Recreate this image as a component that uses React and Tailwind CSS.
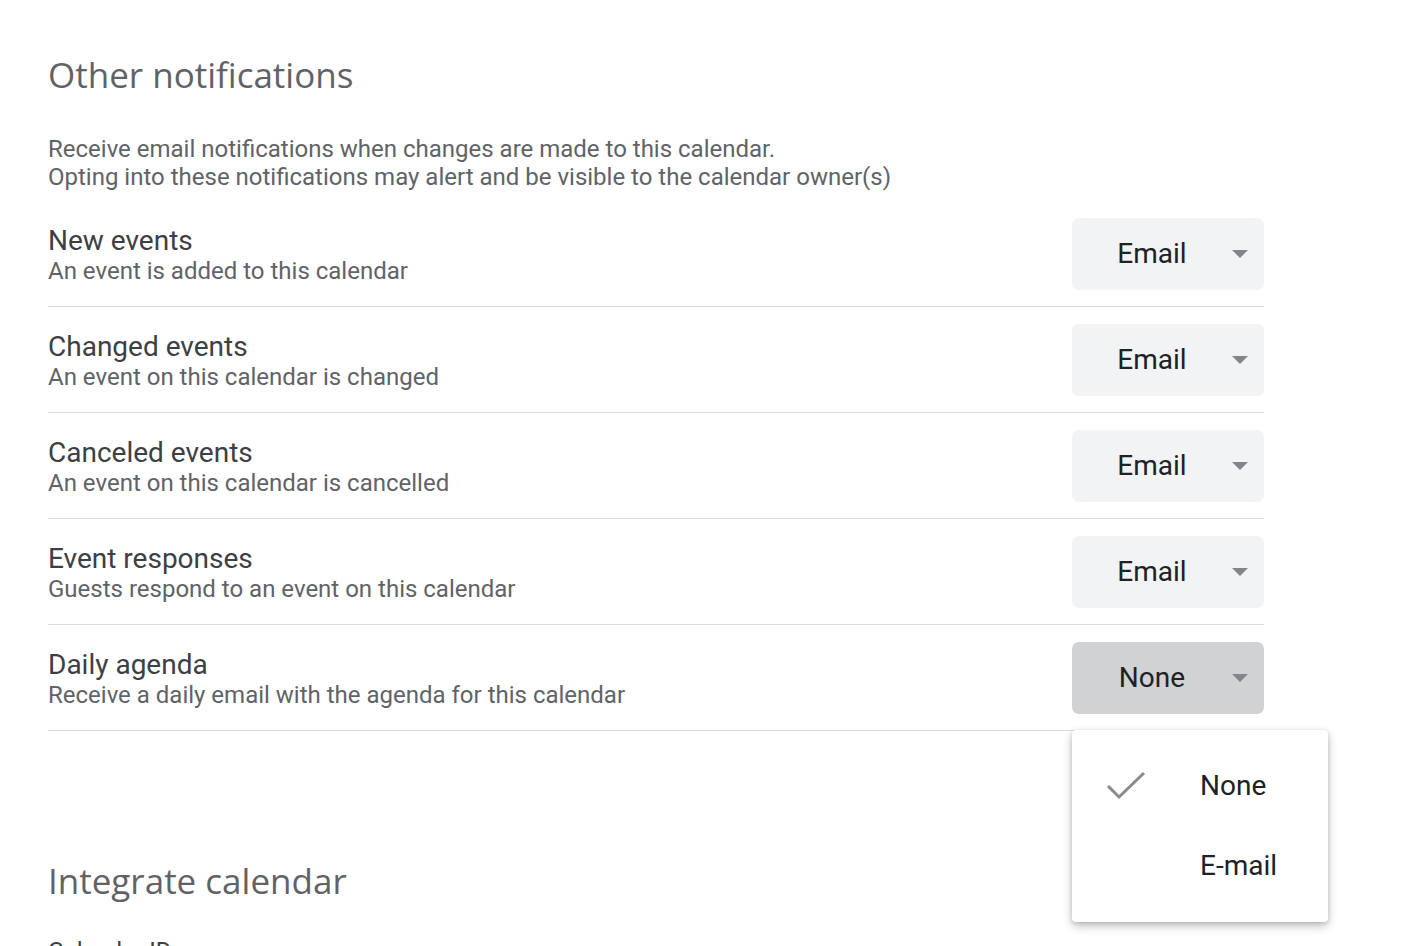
import React from "react";

const rows = [
  { title: "New events", sub: "An event is added to this calendar", value: "Email" },
  { title: "Changed events", sub: "An event on this calendar is changed", value: "Email" },
  { title: "Canceled events", sub: "An event on this calendar is cancelled", value: "Email" },
  { title: "Event responses", sub: "Guests respond to an event on this calendar", value: "Email" },
  { title: "Daily agenda", sub: "Receive a daily email with the agenda for this calendar", value: "None", active: true },
];

function Arrow() {
  return (
    <svg width="16" height="8" viewBox="0 0 16 8" className="shrink-0">
      <path d="M0 0 L16 0 L8 8 Z" fill="#80868b" />
    </svg>
  );
}

export default function App() {
  return (
    <div
      className="relative w-[1410px] h-[946px] overflow-hidden bg-white"
      style={{ fontFamily: "Roboto, 'Liberation Sans', sans-serif" }}
    >
      <div className="pl-[48px] w-[1264px] pt-[53px]">
        <h2 className="text-[35px] leading-[44px] text-[#5f6368] font-['Open_Sans',sans-serif]">
          Other notifications
        </h2>
        <div className="mt-[38px] text-[24px] leading-[28px] text-[#5f6368]">
          <div>Receive email notifications when changes are made to this calendar.</div>
          <div>Opting into these notifications may alert and be visible to the calendar owner(s)</div>
        </div>
        <div className="mt-[10px]">
          {rows.map((r) => (
            <div
              key={r.title}
              className="flex items-center justify-between pt-[17px] pb-[16px] border-b border-[#dadce0]"
            >
              <div className="flex flex-col pt-[1px]">
                <div className="text-[28px] leading-[32px] text-[#3c4043]">{r.title}</div>
                <div className="text-[24px] leading-[28px] text-[#5f6368]">{r.sub}</div>
              </div>
              <div
                className={
                  "w-[192px] h-[72px] rounded-[7px] flex items-center pl-[24px] pr-[16px] gap-[24px] " +
                  (r.active ? "bg-[#d1d2d3]" : "bg-[#f1f3f4]")
                }
              >
                <span className="flex-1 text-center text-[28px] text-[#202124]">{r.value}</span>
                <Arrow />
              </div>
            </div>
          ))}
        </div>
        <h2 className="mt-[128px] text-[35px] leading-[44px] text-[#5f6368] font-['Open_Sans',sans-serif]">
          Integrate calendar
        </h2>
        <div className="mt-[34px] text-[24px] leading-[28px] text-[#3c4043]">Calendar ID</div>
      </div>

      <div className="absolute left-[1072px] top-[730px] w-[256px] bg-white rounded-[4px] py-[16px] shadow-[0_4px_10px_rgba(0,0,0,0.25),0_1px_4px_rgba(0,0,0,0.12)]">
        <div className="h-[80px] flex items-center">
          <div className="w-[128px] flex justify-center pr-[20px]">
            <svg width="40" height="32" viewBox="0 0 40 32">
              <path d="M2 16 L13 27 L38 3" fill="none" stroke="#8a8a8a" strokeWidth="3" />
            </svg>
          </div>
          <span className="text-[28px] text-[#202124]">None</span>
        </div>
        <div className="h-[80px] flex items-center">
          <div className="w-[128px]" />
          <span className="text-[28px] text-[#202124]">E-mail</span>
        </div>
      </div>
    </div>
  );
}
